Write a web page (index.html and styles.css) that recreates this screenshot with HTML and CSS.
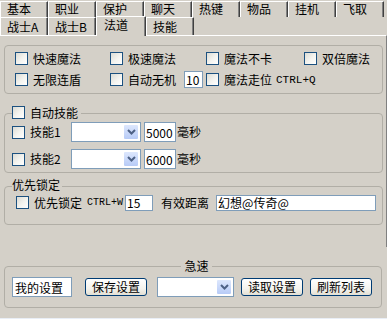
FILE: index.html
```html
<!DOCTYPE html>
<html>
<head>
<title>法道设置</title>
<link rel="stylesheet" href="styles.css">
</head>
<body>
	<div class="tabs">
		<div class="tab-row row-back">
			<span class="tab">基本</span>
			<span class="tab">职业</span>
			<span class="tab">保护</span>
			<span class="tab">聊天</span>
			<span class="tab">热键</span>
			<span class="tab">物品</span>
			<span class="tab">挂机</span>
			<span class="tab">飞取</span>
		</div>
		<div class="tab-row row-front">
			<span class="tab">战士A</span>
			<span class="tab">战士B</span>
			<span class="tab tab-on">法道</span>
			<span class="tab">技能</span>
		</div>
	</div>

	<div class="panel">
		<div class="group g-magic">
			<div class="opts">
				<label class="opt"><span class="cb"></span>快速魔法</label>
				<label class="opt"><span class="cb"></span>极速魔法</label>
				<label class="opt"><span class="cb"></span>魔法不卡</label>
				<label class="opt"><span class="cb"></span>双倍魔法</label>
				<label class="opt"><span class="cb"></span>无限连盾</label>
				<label class="opt"><span class="cb"></span>自动无机<input class="field f-tiny" type="text" value="10"></label>
				<label class="opt opt-wide"><span class="cb"></span>魔法走位<span class="key key-q">CTRL+Q</span></label>
			</div>
		</div>

		<div class="group g-skill">
			<div class="legend"><span class="cb"></span>自动技能</div>
			<div class="srow">
				<span class="cb"></span><span class="slabel">技能1</span>
				<span class="combo c-skill"><span class="drop"><svg width="9" height="6" viewBox="0 0 9 6"><path d="M1 1 L4.5 4.5 L8 1" fill="none" stroke="#4d6185" stroke-width="2"/></svg></span></span>
				<input class="field f-ms" type="text" value="5000"><span class="unit">毫秒</span>
			</div>
			<div class="srow srow-2">
				<span class="cb"></span><span class="slabel">技能2</span>
				<span class="combo c-skill"><span class="drop"><svg width="9" height="6" viewBox="0 0 9 6"><path d="M1 1 L4.5 4.5 L8 1" fill="none" stroke="#4d6185" stroke-width="2"/></svg></span></span>
				<input class="field f-ms" type="text" value="6000"><span class="unit">毫秒</span>
			</div>
		</div>

		<div class="group g-lock">
			<div class="legend legend-text">优先锁定</div>
			<div class="lrow">
				<span class="cb"></span><span class="ltext">优先锁定</span>
				<span class="key key-w">CTRL+W</span>
				<input class="field f-dist" type="text" value="15">
				<span class="ltext range">有效距离</span>
				<input class="field f-name" type="text" value="幻想@传奇@">
			</div>
		</div>
	</div>

	<div class="group g-quick">
		<div class="legend legend-mid">急速</div>
		<div class="qrow">
			<input class="field f-cfg" type="text" value="我的设置">
			<button class="btn b-save">保存设置</button>
			<span class="combo c-cfg"><span class="drop"><svg width="9" height="6" viewBox="0 0 9 6"><path d="M1 1 L4.5 4.5 L8 1" fill="none" stroke="#4d6185" stroke-width="2"/></svg></span></span>
			<button class="btn b-load">读取设置</button>
			<button class="btn b-load">刷新列表</button>
		</div>
	</div>
	<div class="edge"></div>
</body>
</html>
```

FILE: styles.css
```css
* {
	box-sizing: border-box;
}
body {
	margin: 0;
	width: 387px;
	height: 319px;
	overflow: hidden;
	background: #d4d0c8;
	color: #000;
	font-family: "Noto Sans CJK SC", "Liberation Sans", sans-serif;
	font-size: 12px;
	line-height: 14px;
}

/* tabs */
.tab-row {
	display: flex;
}
.row-back {
	height: 17px;
}
.row-front {
	height: 18px;
}
.tab {
	width: 48px;
	border-top: 1px solid #fff;
	border-left: 1px solid #fff;
	border-right: 1px solid #404040;
	box-shadow: inset -1px 0 0 #808080;
	padding-left: 6px;
	line-height: 12px;
}
.row-back .tab {
	height: 16px;
	margin-top: 1px;
	padding-top: 1px;
}
.row-front .tab {
	height: 18px;
	padding-top: 3px;
}
.row-front .tab-on {
	position: relative;
	width: 50px;
	height: 20px;
	margin-top: -1px;
	padding-top: 2px;
	padding-left: 7px;
	background: #d4d0c8;
}

/* main panel */
.panel {
	height: 212px;
	padding: 9px 3px 0 4px;
	border-top: 1px solid #fff;
	border-right: 1px solid #808080;
}
.group {
	border: 1px solid #b1aea6;
	border-radius: 4px;
}
.legend {
	display: flex;
	align-items: center;
	gap: 5px;
	width: fit-content;
	height: 15px;
	padding-right: 3px;
	background: #d4d0c8;
}

.cb {
	display: inline-block;
	flex: none;
	width: 13px;
	height: 13px;
	border: 1px solid #1c5180;
	background: linear-gradient(135deg, #dcdcd5, #f4f4f0 55%, #fff);
}

.field {
	display: block;
	border: 1px solid #7f9db9;
	background: #fff;
	font: inherit;
	color: #000;
	padding: 0 1px;
	margin: 0;
	outline: none;
}
.combo {
	display: flex;
	justify-content: flex-end;
	height: 20px;
	padding: 1px;
	border: 1px solid #7f9db9;
	background: #fff;
}
.drop {
	display: flex;
	align-items: center;
	justify-content: center;
	width: 16px;
	border: 1px solid #fff;
	border-radius: 2px;
	background: linear-gradient(#dde7fd, #b7cbf7);
}
.key {
	font-family: "Liberation Mono", monospace;
	font-size: 10px;
}

/* magic options */
.g-magic {
	padding: 2px 0 3px 10px;
}
.opts {
	display: grid;
	grid-template-columns: 95px 96px 98px auto;
	grid-auto-rows: 21px;
	align-items: center;
}
.opt {
	display: flex;
	align-items: center;
	gap: 5px;
	white-space: nowrap;
}
.opt-wide {
	grid-column: span 2;
}
.f-tiny {
	width: 19px;
	height: 17px;
	margin-left: 3px;
}
.key-q {
	font-size: 11px;
	margin-left: -1px;
}

/* auto skills */
.g-skill {
	margin-top: 19px;
	padding: 0 0 3px 7px;
}
.g-skill .legend {
	margin-top: -9px;
}
.srow {
	display: flex;
	align-items: center;
	height: 20px;
	margin-top: 2px;
}
.srow-2 {
	margin-top: 7px;
}
.slabel {
	width: 46px;
	padding-left: 5px;
}
.c-skill {
	width: 70px;
}
.f-ms {
	width: 32px;
	height: 20px;
	margin-left: 3px;
}
.unit {
	margin-left: 1px;
}

/* lock */
.g-lock {
	margin-top: 13px;
	padding: 0 0 13px 11px;
}
.g-lock .legend {
	margin: -9px 0 0 -4px;
	height: 14px;
	padding: 0 2px 0 0;
}
.lrow {
	display: flex;
	align-items: center;
	height: 17px;
	margin-top: 2px;
}
.ltext {
	padding-left: 5px;
}
.key-w {
	margin-left: 5px;
}
.f-dist {
	width: 28px;
	height: 16px;
	margin-left: 2px;
}
.range {
	margin-left: 3px;
}
.f-name {
	width: 160px;
	height: 16px;
	margin-left: 7px;
}

/* quick */
.g-quick {
	width: 378px;
	margin: 19px 0 0 4px;
	padding: 0 0 10px 7px;
}
.legend-mid {
	margin: -8px auto 0;
	height: 14px;
	padding: 0 3px;
}
.qrow {
	display: flex;
	align-items: center;
	height: 20px;
	margin-top: 4px;
}
.f-cfg {
	width: 60px;
	height: 20px;
	padding-left: 2px;
}
.btn {
	width: 62px;
	height: 18px;
	padding: 0;
	border: 1px solid #003c74;
	border-radius: 3px;
	background: linear-gradient(#fff, #f4f3ee 60%, #e3e0d4);
	font: inherit;
	color: #000;
}
.b-save {
	margin-left: 13px;
}
.c-cfg {
	width: 77px;
	margin-left: 10px;
}
.b-load {
	margin-left: 7px;
}
.edge {
	height: 2px;
	margin-top: 10px;
	background: #e9eef6;
}
```
